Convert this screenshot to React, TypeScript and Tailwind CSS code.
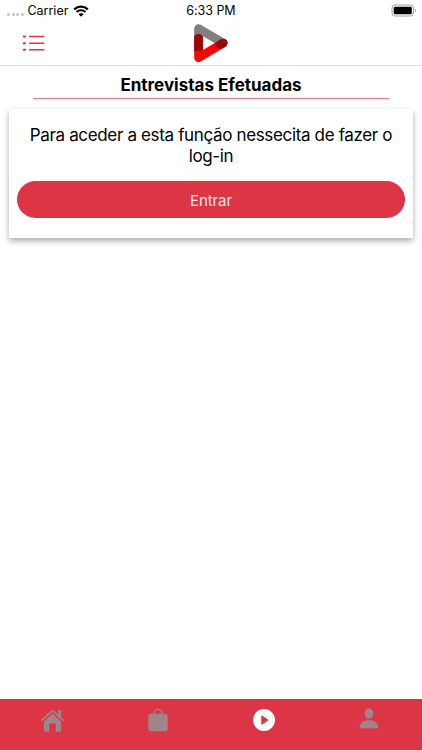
import React from 'react';

const StatusBar: React.FC = () => (
  <div className="grid h-5 grid-cols-3 items-center text-[12.5px] leading-5 text-black">
    <div className="flex items-center pl-[7px]">
      <div className="flex gap-[1.5px] pt-[7px]">
        {[0, 1, 2, 3].map((dot) => (
          <span key={dot} className="h-[3px] w-[3px] rounded-full bg-[#c4c4c4]" />
        ))}
      </div>
      <span className="ml-[4px] pt-px tracking-[-0.02px]">Carrier</span>
      <svg className="ml-[5px] mt-px" width="16" height="12" viewBox="0 0 16 12" fill="none">
        <path d="M1.2 4.4C5 .7 11 .7 14.8 4.4" stroke="#000" strokeWidth="2.3" />
        <path d="M3.5 7c2.5-2.3 6.5-2.3 9 0" stroke="#000" strokeWidth="2.1" />
        <path d="M5.4 9.1c1.4-1.3 3.8-1.3 5.2 0L8 11.7z" fill="#000" />
      </svg>
    </div>
    <span className="pt-px text-center tracking-[-0.05px]">6:33 PM</span>
    <div className="flex justify-end pr-[5px]">
      <svg width="26" height="13" viewBox="0 0 26 13">
        <rect x="1" y="1" width="21.5" height="11" rx="3" fill="#fff" stroke="#a3a3a3" />
        <rect x="2.7" y="2.7" width="18.1" height="7.6" rx="1.4" fill="#000" />
        <path d="M24 4.7c1.3.4 1.3 3.2 0 3.6z" fill="#a3a3a3" />
      </svg>
    </div>
  </div>
);

const Logo: React.FC = () => (
  <svg width="36" height="40" viewBox="0 0 36 40" fill="none">
    <path d="M5.5 26V5.5L30.2 20" stroke="#808080" strokeWidth="8.6" strokeLinecap="round" strokeLinejoin="round" />
    <path d="M5.5 15.5V34.7L30.2 20" stroke="#fa0505" strokeWidth="8.6" strokeLinecap="round" strokeLinejoin="round" />
    <path d="M1.2 14.5a4.3 3.6 0 0 1 8.6 0v12.3L7.6 28H1.2z" fill="#9c0808" />
    <path d="M24 18.7l3.9-2.4 4.4-.1a4.3 4.3 0 0 1 0 7.5l-4.6 2.7-4.9-2.9a3.2 3.2 0 0 1 1.2-4.8z" fill="#9c0808" />
  </svg>
);

const Header: React.FC = () => (
  <header className="grid h-[46px] grid-cols-3 border-b border-[#dcdcdc]">
    <div className="pl-[22px] pt-[15px]">
      <svg width="24" height="17" viewBox="0 0 24 17" fill="none" stroke="#dc3545" strokeWidth="1.5" strokeLinecap="round">
        <path d="M7.7 1.5h14.1M7.7 8.2h14.1M7.7 14.8h14.1" />
        <path d="M1.7 1.5h1.5M1.7 8.2h1.5M1.7 14.8h1.5" strokeWidth="1.9" />
      </svg>
    </div>
    <div className="flex justify-center pt-[3px]">
      <Logo />
    </div>
  </header>
);

const TabBar: React.FC = () => (
  <nav className="grid h-[51px] grid-cols-4 border-t border-[#d23141] bg-[#dc3545] text-[#9f858a]">
    <div className="flex justify-center pt-[8px]">
      <svg width="25" height="25" viewBox="0 0 25 25" fill="currentColor">
        <path d="M1.8 12.4l9.6-9.1a1.6 1.6 0 0 1 2.2 0l9.6 9.1" fill="none" stroke="currentColor" strokeWidth="1.7" strokeLinecap="round" strokeLinejoin="round" />
        <path d="M18.2 2h2.8v8.2l-2.8-2.7z" />
        <path d="M12.5 5.4l8.6 8.2v9a1.1 1.1 0 0 1-1.1 1.1h-4.2v-7.5a.8.8 0 0 0-.8-.8h-5a.8.8 0 0 0-.8.8v7.5H5a1.1 1.1 0 0 1-1.1-1.1v-9z" />
      </svg>
    </div>
    <div className="flex justify-center pt-[8px]">
      <svg width="20" height="24" viewBox="0 0 20 24" fill="none">
        <path d="M6 7V5.5a4 4 0 0 1 8 0V7" stroke="currentColor" strokeWidth="1.5" />
        <rect x="0.3" y="5.7" width="19.4" height="17.6" rx="3" fill="currentColor" />
      </svg>
    </div>
    <div className="flex justify-center pt-[9px]">
      <svg width="22" height="22" viewBox="0 0 22 22">
        <circle cx="11" cy="11" r="11" fill="#fff" />
        <path d="M8.2 7.1c0-.5.5-.8.9-.5l6 3.9c.4.3.4.8 0 1.1l-6 3.8c-.4.3-.9 0-.9-.5z" fill="#dc3545" />
      </svg>
    </div>
    <div className="flex justify-center pt-[8px]">
      <svg width="20" height="22" viewBox="0 0 20 22" fill="currentColor">
        <ellipse cx="10" cy="5.6" rx="4.4" ry="5" />
        <path d="M.8 18.5C1.6 14.1 5 12.3 10 12.3s8.4 1.8 9.2 6.2c.2.9-.4 1.7-1.4 1.7H2.2c-1 0-1.6-.8-1.4-1.7z" />
      </svg>
    </div>
  </nav>
);

export default function App() {
  return (
    <div className="flex h-[750px] w-[422px] flex-col overflow-hidden bg-white font-['Inter','Liberation_Sans',sans-serif] text-black">
      <StatusBar />
      <Header />
      <main className="flex-1">
        <h1 className="mx-[33px] h-[33px] border-b border-[#e57783] pt-[7px] text-center text-[17px] leading-6 font-bold whitespace-nowrap">
          Entrevistas Efetuadas
        </h1>
        <section className="mx-[9px] mt-[10px] h-[129px] bg-white px-2 pt-[16px] shadow-[0_3px_6px_rgba(0,0,0,0.32)]">
          <p className="text-center text-[17px] leading-[20.5px] tracking-[-0.35px] whitespace-nowrap">
            Para aceder a esta função nessecita de fazer o
            <br />
            log-in
          </p>
          <button className="mt-[15px] flex h-[37px] w-full items-center justify-center rounded-full bg-[#dc3545] pt-[3px] text-[15px] tracking-[-0.1px] text-[#fbe9eb]">
            Entrar
          </button>
        </section>
      </main>
      <TabBar />
    </div>
  );
}
